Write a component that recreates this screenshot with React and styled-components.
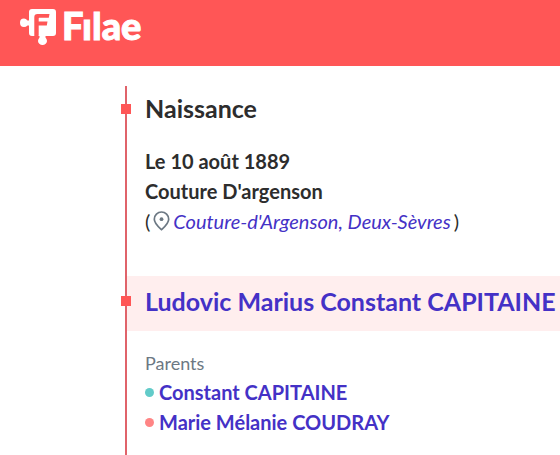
import React from "react";
import styled, { createGlobalStyle } from "styled-components";

const GlobalStyle = createGlobalStyle`
  * {
    box-sizing: border-box;
  }

  body {
    margin: 0;
    background: #ffffff;
    color: #2d2d2d;
    font-family: Lato, "Liberation Sans", sans-serif;
    overflow-x: hidden;
  }
`

const Page = styled.div`
  display: flex;
  flex-direction: column;
  min-height: 100vh;
`

const Header = styled.header`
  height: 66px;
  padding: 4px 20px;
  background: #ff5656;
`

const Logo = styled.a`
  display: inline-flex;
  gap: 6px;
  color: #ffffff;
  text-decoration: none;
`

const LogoText = styled.span`
  font-size: 38px;
  font-weight: 900;
  line-height: 43px;
  -webkit-text-stroke: 1px #ffffff;
`

const Timeline = styled.main`
  flex: 1;
  margin-top: 20px;
  margin-left: 125px;
  border-left: 2px solid #e0636a;
`

const Title = styled.h2`
  position: relative;
  margin: 0;
  padding: ${props => props.$highlight ? "0 0 5px 18px" : "0 0 2px 18px"};
  background: ${props => props.$highlight ? "#ffeeee" : "transparent"};
  font-size: 25px;
  font-weight: 700;
  line-height: ${props => props.$highlight ? "50px" : "44px"};
  white-space: nowrap;

  &::before {
    content: "";
    position: absolute;
    top: ${props => props.$highlight ? "20px" : "18px"};
    left: -6px;
    width: 10px;
    height: 10px;
    background: #ff5656;
  }
`

const Details = styled.div`
  padding: 14px 18px 40px;
  font-size: 20px;
  line-height: 30px;
`

const Line = styled.p`
  margin: 0;
  font-weight: ${props => props.$bold ? 700 : 400};
`

const Place = styled.p`
  display: flex;
  align-items: center;
  gap: 3px;
  margin: 0;
`

const Link = styled.a`
  color: #4431c6;
  font-style: ${props => props.$italic ? "italic" : "normal"};
  text-decoration: none;
`

const Family = styled.section`
  padding: 18px 18px 16px;
`

const Label = styled.h3`
  margin: 0;
  color: #6c7883;
  font-size: 18px;
  font-weight: 400;
  line-height: 28px;
`

const People = styled.ul`
  margin: 0;
  padding: 0;
  list-style: none;
`

const Person = styled.li`
  display: flex;
  align-items: center;
  gap: 5px;
  font-size: 20px;
  font-weight: 700;
  line-height: 30px;

  &::before {
    content: "";
    width: 9px;
    height: 9px;
    border-radius: 50%;
    background: ${props => props.$color};
  }
`

const parents = [
  { name: "Constant CAPITAINE", color: "#62cbc9" },
  { name: "Marie Mélanie COUDRAY", color: "#ff8585" },
]

function PuzzleIcon() {
  return (
    <svg width="36" height="44" viewBox="0 0 36 44" aria-hidden="true">
      <path
        fill="#ffffff"
        d="M12 5H33Q36 5 36 8V29Q36 32 33 32H25.500V33.500Q27 35 27 37A4.500 4 0 0 1 18 37Q18 35 19.500 33.500V32H12Q9 32 9 29V21.500H7.500Q6 23 4 23A4 4.200 0 0 1 4 14.600Q6 14.600 7.500 16.500H9V8Q9 5 12 5Z"
      />
      <path
        fill="#ff5656"
        d="M17.500 10H29.500L28.800 13.800H19.300Q18.700 13.800 18.700 14.500V17.600H27.500L26.800 21.400H18.700V31Q18.700 33 17.500 33H14.300V13Q14.300 10 17.500 10Z"
      />
    </svg>
  )
}

function PinIcon() {
  return (
    <svg width="17" height="20" viewBox="0 0 17 20" aria-hidden="true">
      <path
        fill="none"
        stroke="#6c7883"
        strokeWidth="1.7"
        d="M8.500 18.600C5.500 15.800 1.300 12.400 1.300 8.200A7.200 7.200 0 0 1 15.700 8.200C15.700 12.400 11.500 15.800 8.500 18.600Z"
      />
      <circle cx="8.500" cy="8.200" r="1.900" fill="#6c7883" />
    </svg>
  )
}

export default function App() {
  return (
    <>
      <GlobalStyle />
      <Page>
        <Header>
          <Logo href="#">
            <PuzzleIcon />
            <LogoText>Fılae</LogoText>
          </Logo>
        </Header>

        <Timeline>
          <Title>Naissance</Title>
          <Details>
            <Line $bold>Le 10 août 1889</Line>
            <Line $bold>Couture D'argenson</Line>
            <Place>
              <span>(</span>
              <PinIcon />
              <Link href="#" $italic>Couture-d'Argenson, Deux-Sèvres</Link>
              <span>)</span>
            </Place>
          </Details>

          <Title $highlight>
            <Link href="#">Ludovic Marius Constant CAPITAINE</Link>
          </Title>
          <Family>
            <Label>Parents</Label>
            <People>
              {parents.map(parent => (
                <Person key={parent.name} $color={parent.color}>
                  <Link href="#">{parent.name}</Link>
                </Person>
              ))}
            </People>
          </Family>
        </Timeline>
      </Page>
    </>
  )
}
